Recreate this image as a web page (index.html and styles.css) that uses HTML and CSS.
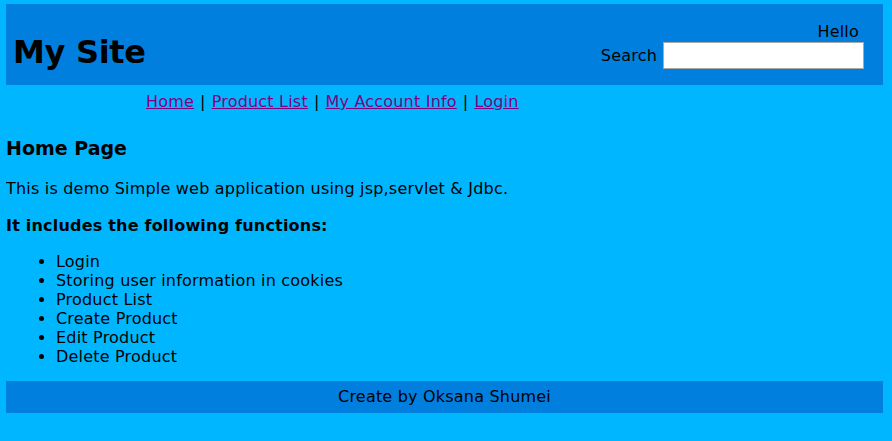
FILE: index.html
```html
<!DOCTYPE html>
<html>
<head>
<meta charset="utf-8">
<title>Home Page</title>
<link rel="stylesheet" href="styles.css">
</head>
<body>
<div class="header">
  <h1 class="site-title">My Site</h1>
  <div class="header-right">
    <div class="hello">Hello</div>
    <div class="search">
      <span class="search-label">Search</span>
      <input class="search-input" type="text" name="search">
    </div>
  </div>
</div>
<div class="menu">
  <a href="#">Home</a><span class="sep">|</span><a href="#">Product List</a><span class="sep">|</span><a href="#">My Account Info</a><span class="sep">|</span><a href="#">Login</a>
</div>
<div class="content">
  <h3 class="page-title">Home Page</h3>
  <p class="intro">This is demo Simple web application using jsp,servlet &amp; Jdbc.</p>
  <h4 class="features-title">It includes the following functions:</h4>
  <ul class="features">
    <li>Login</li>
    <li>Storing user information in cookies</li>
    <li>Product List</li>
    <li>Create Product</li>
    <li>Edit Product</li>
    <li>Delete Product</li>
  </ul>
</div>
<div class="footer">Create by Oksana Shumei</div>
</body>
</html>
```
FILE: styles.css
```css
html, body {
  background: #00b7ff;
}
body {
  margin: 4px 9px 0 6px;
  font-family: "DejaVu Sans", Verdana, sans-serif;
  font-size: 16px;
  letter-spacing: 0.2px;
  color: #000;
}
.header {
  background: #007fdf;
  height: 81px;
  display: flex;
  justify-content: space-between;
  align-items: flex-end;
  box-sizing: border-box;
  padding: 0 19px 16px 7px;
}
.site-title {
  margin: 0 0 -1px 0;
  font-size: 32px;
  font-weight: bold;
  line-height: 36px;
  letter-spacing: -0.3px;
}
.header-right {
  display: flex;
  flex-direction: column;
  align-items: flex-end;
}
.hello {
  line-height: 19px;
  margin: 0 5px 1px 0;
}
.search {
  display: flex;
  align-items: center;
  gap: 6px;
}
.search-input {
  width: 201px;
  height: 27px;
  box-sizing: border-box;
  border: 1px solid #a9a9a9;
  margin: 0;
  padding: 1px 2px;
  background: #fff;
}
.menu {
  padding: 7px 0 0 140px;
  line-height: 20px;
}
.menu a {
  color: #800080;
}
.sep {
  display: inline-block;
  margin: 0 6px;
}
.content {
  padding-top: 25px;
}
.page-title {
  margin: 0 0 20px 0;
  font-size: 19px;
  line-height: 22px;
  letter-spacing: 0;
}
.intro {
  margin: 0 0 18px 0;
  line-height: 19px;
}
.features-title {
  margin: 0 0 17px 0;
  font-size: 16px;
  line-height: 19px;
}
.features {
  margin: 0 0 15px 0;
  padding-left: 50px;
  line-height: 19px;
}
.footer {
  background: #007fdf;
  height: 32px;
  line-height: 32px;
  text-align: center;
}
```
